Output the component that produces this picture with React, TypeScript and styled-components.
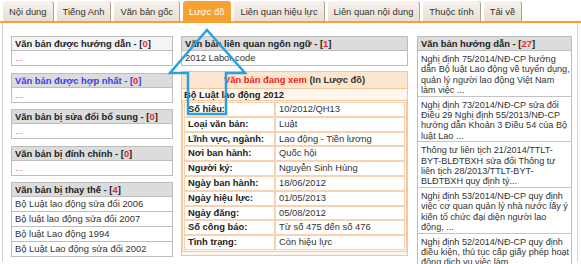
import React from 'react';
import styled, {createGlobalStyle} from 'styled-components';

const GlobalStyle = createGlobalStyle`
  body {
    margin: 0;
    background: #fff;
    font-family: "Liberation Sans", Arial, sans-serif;
    font-size: 9.4px;
    color: #333;
  }
`;

const tabs = ['Nội dung', 'Tiếng Anh', 'Văn bản gốc', 'Lược đồ', 'Liên quan hiệu lực', 'Liên quan nội dung', 'Thuộc tính', 'Tải về'];

const replaced = [
    'Bộ Luật lao động sửa đổi 2006',
    'Bộ luật lao động sửa đổi 2007',
    'Bộ luật Lao động 1994',
    'Bộ Luật Lao động sửa đổi 2002',
];

const details: [string, string][] = [
    ['Số hiệu:', '10/2012/QH13'],
    ['Loại văn bản:', 'Luật'],
    ['Lĩnh vực, ngành:', 'Lao động - Tiền lương'],
    ['Nơi ban hành:', 'Quốc hội'],
    ['Người ký:', 'Nguyễn Sinh Hùng'],
    ['Ngày ban hành:', '18/06/2012'],
    ['Ngày hiệu lực:', '01/05/2013'],
    ['Ngày đăng:', '05/08/2012'],
    ['Số công báo:', 'Từ số 475 đến số 476'],
    ['Tình trạng:', 'Còn hiệu lực'],
];

const guides = [
    'Nghị định 75/2014/NĐ-CP hướng dẫn Bộ luật Lao động về tuyển dụng, quản lý người lao động Việt Nam làm việc ...',
    'Nghị định 73/2014/NĐ-CP sửa đổi Điều 29 Nghị định 55/2013/NĐ-CP hướng dẫn Khoản 3 Điều 54 của Bộ luật Lao ...',
    'Thông tư liên tịch 21/2014/TTLT-BYT-BLĐTBXH sửa đổi Thông tư liên tịch 28/2013/TTLT-BYT-BLĐTBXH quy định tỷ...',
    'Nghị định 53/2014/NĐ-CP quy định việc cơ quan quản lý nhà nước lấy ý kiến tổ chức đại diện người lao động, ...',
    'Nghị định 52/2014/NĐ-CP quy định điều kiện, thủ tục cấp giấy phép hoạt động dịch vụ việc làm ...',
];

const Count = ({n}: {n: number}) => <> - [<Num>{n}</Num>]</>;

const EmptyBox = ({title, n, light, link}: {title: string; n: number; light?: boolean; link?: boolean}) => (
    <Box>
        <BoxHeader $light={light} $link={link}>{title}<Count n={n}/></BoxHeader>
        <BoxRow><Dots>...</Dots></BoxRow>
    </Box>
);

export default function App() {
    return (
        <Page>
            <GlobalStyle/>
            <TabBar>
                {tabs.map(t => <Tab key={t} $active={t === 'Lược đồ'}>{t}</Tab>)}
            </TabBar>

            <Content>
                <LeftColumn>
                    <EmptyBox title="Văn bản được hướng dẫn" n={0} light/>
                    <EmptyBox title="Văn bản được hợp nhất" n={0} link/>
                    <EmptyBox title="Văn bản bị sửa đổi bổ sung" n={0}/>
                    <EmptyBox title="Văn bản bị đính chính" n={0}/>
                    <Box>
                        <BoxHeader>Văn bản bị thay thế<Count n={4}/></BoxHeader>
                        {replaced.map(r => <BoxRow key={r}>{r}</BoxRow>)}
                    </Box>
                </LeftColumn>

                <MiddleColumn>
                    <Box>
                        <BoxHeader>Văn bản liên quan ngôn ngữ<Count n={1}/></BoxHeader>
                        <BoxRow>2012 Labor code</BoxRow>
                    </Box>
                    <CurrentBox>
                        <CurrentHeader><Red>Văn bản đang xem</Red> (In Lược đồ)</CurrentHeader>
                        <DocTitle>Bộ Luật lao động 2012</DocTitle>
                        <InfoTable>
                            <tbody>
                            {details.map(([k, v]) => (
                                <tr key={k}>
                                    <Label>{k}</Label>
                                    <Value>{v}</Value>
                                </tr>
                            ))}
                            </tbody>
                        </InfoTable>
                    </CurrentBox>
                </MiddleColumn>

                <RightColumn>
                    <Box>
                        <BoxHeader>Văn bản hướng dẫn<Count n={27}/></BoxHeader>
                        {guides.map(g => <GuideItem key={g}>{g}</GuideItem>)}
                    </Box>
                </RightColumn>
            </Content>

            <Arrow width="581" height="264" viewBox="0 0 581 264">
                <path d="M207 30 L245 73 L226 73 L226 114 L188 114 L188 73 L170 73 Z"
                      fill="none" stroke="#2aa0dc" strokeWidth="2.5" strokeLinejoin="miter"/>
            </Arrow>
        </Page>
    );
}

const Page = styled.div`
  position: relative;
  width: 581px;
  height: 264px;
  overflow: hidden;
`;

const TabBar = styled.div`
  display: flex;
  align-items: flex-end;
  gap: 3px;
  height: 23px;
  padding-left: 3px;
  box-sizing: border-box;
  border-bottom: 2px solid #f7a133;
`;

const Tab = styled.div<{$active?: boolean}>`
  height: 20px;
  padding: 0 6px;
  display: flex;
  align-items: center;
  white-space: nowrap;
  border-radius: 3px 3px 0 0;
  border-right: 1px solid ${p => p.$active ? '#f7a133' : '#aaa39a'};
  background: ${p => p.$active ? '#f7a133' : 'linear-gradient(#f8f3ee, #e8ded2)'};
  color: ${p => p.$active ? '#fff' : '#333'};
`;

const Content = styled.div`
  display: flex;
  align-items: flex-start;
  gap: 8px;
  height: 239px;
  margin-left: 2px;
  width: 576px;
  box-sizing: border-box;
  padding: 13px 5px 0 8px;
  border-left: 1px solid #d2d2d2;
  border-right: 1px solid #d2d2d2;
`;

const LeftColumn = styled.div`
  width: 162px;
  display: flex;
  flex-direction: column;
  gap: 6.5px;
`;

const MiddleColumn = styled.div`
  width: 227px;
  display: flex;
  flex-direction: column;
  gap: 5px;
`;

const RightColumn = styled.div`
  width: 155px;
  margin-left: 1px;
`;

const Box = styled.div`
  border: 1px solid #bdbdbd;
  background: #fff;
`;

const BoxHeader = styled.div<{$light?: boolean; $link?: boolean}>`
  padding: 0 3px;
  line-height: 13px;
  font-weight: bold;
  white-space: nowrap;
  color: ${p => p.$link ? '#3b3bf0' : '#222'};
  background: ${p => p.$light ? '#f4f4f4' : '#dcdcdc'};
  border-bottom: 1px solid #bdbdbd;
`;

const Num = styled.span`
  color: #e8262a;
`;

const BoxRow = styled.div`
  padding: 0 3px;
  line-height: 14px;
  white-space: nowrap;
  & + & {
    border-top: 1px solid #bdbdbd;
  }
`;

const Dots = styled.span`
  color: #c8658a;
`;

const CurrentBox = styled.div`
  border: 1px solid #f5c59a;
  background: #fff6ed;
  padding-bottom: 3px;
`;

const CurrentHeader = styled.div`
  text-align: center;
  font-weight: bold;
  line-height: 16px;
  color: #333;
  background: #fde6cf;
  border-bottom: 1px solid #f5c59a;
`;

const Red = styled.span`
  color: #f21c1c;
`;

const DocTitle = styled.div`
  font-weight: bold;
  color: #222;
  line-height: 10px;
  padding: 1px 2px 0;
`;

const InfoTable = styled.table`
  width: 100%;
  border-collapse: separate;
  border-spacing: 0;
  padding: 1px;
  box-sizing: border-box;
  border: 1px solid #f6c9a1;
`;

const Label = styled.td`
  width: 83px;
  padding: 0 3px;
  line-height: 12.8px;
  font-weight: bold;
  color: #222;
  background: #fff;
  border: 1px solid #f9d3b1;
  white-space: nowrap;
`;

const Value = styled.td`
  padding: 0 3px;
  line-height: 12.8px;
  color: #333;
  background: #fff;
  border: 1px solid #f9d3b1;
  white-space: nowrap;
`;

const GuideItem = styled.div`
  padding: 3px 1px 0 3px;
  font-size: 9.1px;
  line-height: 10.4px;
  color: #333;
  & + & {
    border-top: 1px solid #c4c4c4;
  }
`;

const Arrow = styled.svg`
  position: absolute;
  left: 0;
  top: 0;
  pointer-events: none;
`;
